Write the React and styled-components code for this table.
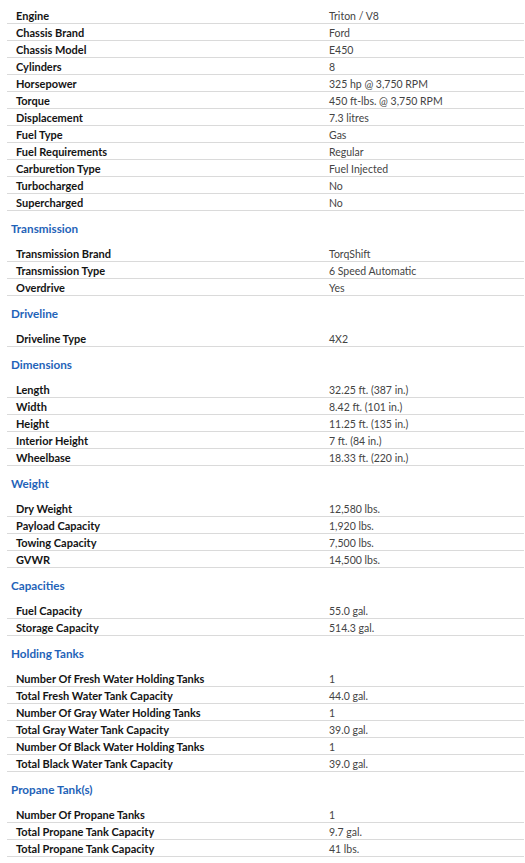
import React from 'react';
import styled, { createGlobalStyle } from 'styled-components';

const GlobalStyle = createGlobalStyle`
  html, body { margin: 0; padding: 0; background: #fff; }
  body { font-family: Lato, "Liberation Sans", sans-serif; }
`;

const Page = styled.div`
  padding: 7px 1px 0 7px;
`;

const SectionTitle = styled.div`
  height: 34px;
  display: flex;
  align-items: center;
  padding-left: 4px;
  font-size: 11.7px;
  font-weight: 700;
  color: #1f63b8;
`;

const Row = styled.div`
  display: grid;
  grid-template-columns: 322px 1fr;
  height: 16px;
  align-items: center;
  border-bottom: 1px solid #dadada;
`;

const Label = styled.div`
  padding-left: 9px;
  font-size: 11px;
  font-weight: 700;
  color: #141414;
  white-space: nowrap;
`;

const Value = styled.div`
  padding-top: 1px;
  font-size: 10.5px;
  color: #444;
  white-space: nowrap;
`;

const sections = [
  {
    title: null,
    rows: [
      ['Engine', 'Triton / V8'],
      ['Chassis Brand', 'Ford'],
      ['Chassis Model', 'E450'],
      ['Cylinders', '8'],
      ['Horsepower', '325 hp @ 3,750 RPM'],
      ['Torque', '450 ft-lbs. @ 3,750 RPM'],
      ['Displacement', '7.3 litres'],
      ['Fuel Type', 'Gas'],
      ['Fuel Requirements', 'Regular'],
      ['Carburetion Type', 'Fuel Injected'],
      ['Turbocharged', 'No'],
      ['Supercharged', 'No'],
    ],
  },
  {
    title: 'Transmission',
    rows: [
      ['Transmission Brand', 'TorqShift'],
      ['Transmission Type', '6 Speed Automatic'],
      ['Overdrive', 'Yes'],
    ],
  },
  { title: 'Driveline', rows: [['Driveline Type', '4X2']] },
  {
    title: 'Dimensions',
    rows: [
      ['Length', '32.25 ft. (387 in.)'],
      ['Width', '8.42 ft. (101 in.)'],
      ['Height', '11.25 ft. (135 in.)'],
      ['Interior Height', '7 ft. (84 in.)'],
      ['Wheelbase', '18.33 ft. (220 in.)'],
    ],
  },
  {
    title: 'Weight',
    rows: [
      ['Dry Weight', '12,580 lbs.'],
      ['Payload Capacity', '1,920 lbs.'],
      ['Towing Capacity', '7,500 lbs.'],
      ['GVWR', '14,500 lbs.'],
    ],
  },
  {
    title: 'Capacities',
    rows: [
      ['Fuel Capacity', '55.0 gal.'],
      ['Storage Capacity', '514.3 gal.'],
    ],
  },
  {
    title: 'Holding Tanks',
    rows: [
      ['Number Of Fresh Water Holding Tanks', '1'],
      ['Total Fresh Water Tank Capacity', '44.0 gal.'],
      ['Number Of Gray Water Holding Tanks', '1'],
      ['Total Gray Water Tank Capacity', '39.0 gal.'],
      ['Number Of Black Water Holding Tanks', '1'],
      ['Total Black Water Tank Capacity', '39.0 gal.'],
    ],
  },
  {
    title: 'Propane Tank(s)',
    rows: [
      ['Number Of Propane Tanks', '1'],
      ['Total Propane Tank Capacity', '9.7 gal.'],
      ['Total Propane Tank Capacity', '41 lbs.'],
    ],
  },
];

export default function App() {
  return (
    <>
      <GlobalStyle />
      <Page>
        {sections.map((s, i) => (
          <section key={i}>
            {s.title && <SectionTitle>{s.title}</SectionTitle>}
            {s.rows.map(([l, v], j) => (
              <Row key={j}>
                <Label>{l}</Label>
                <Value>{v}</Value>
              </Row>
            ))}
          </section>
        ))}
      </Page>
    </>
  );
}
